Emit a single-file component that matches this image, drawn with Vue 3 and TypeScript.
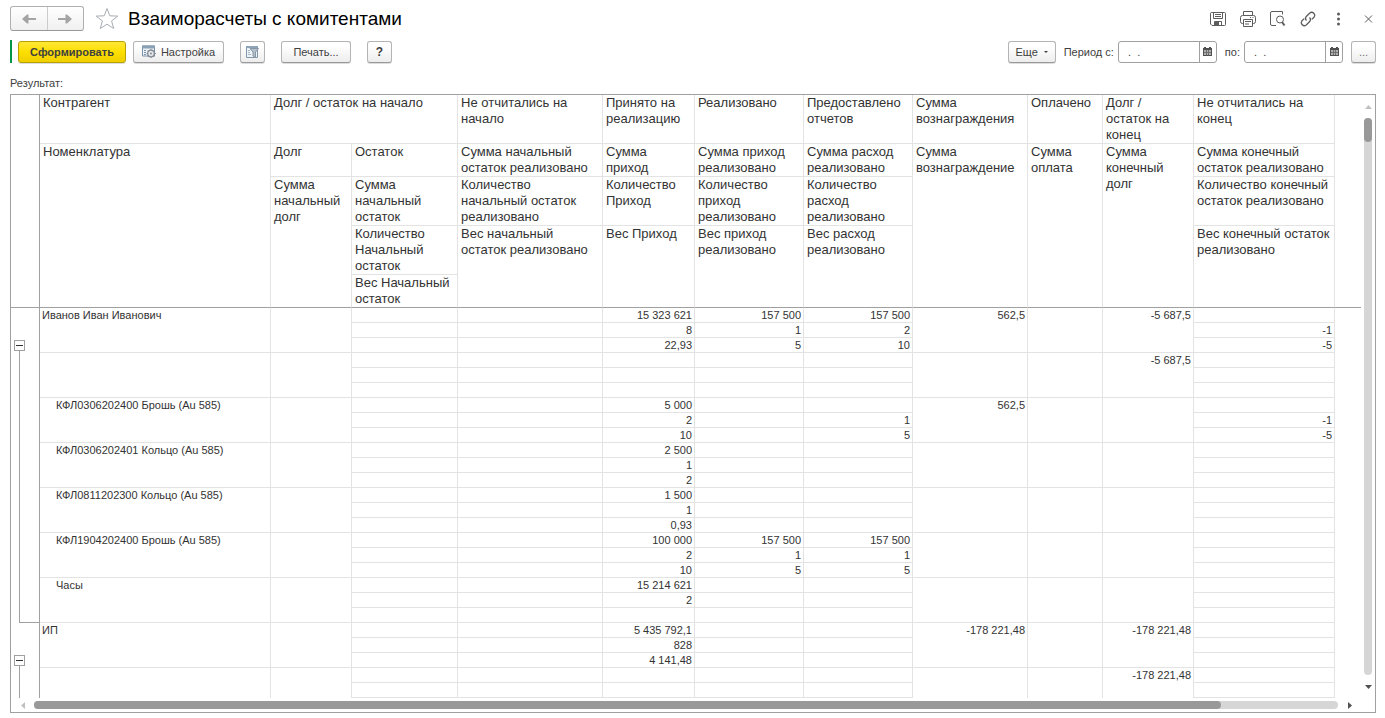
<script setup lang="ts">
import { computed, ref } from 'vue'

interface Entry {
  name: string
  child?: boolean
  received?: string[]
  sold?: string[]
  reported?: string[]
  fee?: string
  debt?: string
  closing?: string[]
}

interface Group {
  id: number
  entries: Entry[]
}

interface Line {
  key: string
  groupId: number
  entry: Entry
  line: number
  head: boolean
  treeSpan: number
}

const groups: Group[] = [
  {
    id: 1,
    entries: [
      {
        name: 'Иванов Иван Иванович',
        received: ['15 323 621', '8', '22,93'],
        sold: ['157 500', '1', '5'],
        reported: ['157 500', '2', '10'],
        fee: '562,5',
        debt: '-5 687,5',
        closing: ['', '-1', '-5'],
      },
      { name: '', child: true, debt: '-5 687,5' },
      {
        name: 'КФЛ0306202400 Брошь (Au 585)',
        child: true,
        received: ['5 000', '2', '10'],
        reported: ['', '1', '5'],
        fee: '562,5',
        closing: ['', '-1', '-5'],
      },
      { name: 'КФЛ0306202401 Кольцо (Au 585)', child: true, received: ['2 500', '1', '2'] },
      { name: 'КФЛ0811202300 Кольцо (Au 585)', child: true, received: ['1 500', '1', '0,93'] },
      {
        name: 'КФЛ1904202400 Брошь (Au 585)',
        child: true,
        received: ['100 000', '2', '10'],
        sold: ['157 500', '1', '5'],
        reported: ['157 500', '1', '5'],
      },
      { name: 'Часы', child: true, received: ['15 214 621', '2', ''] },
    ],
  },
  {
    id: 2,
    entries: [
      { name: 'ИП', received: ['5 435 792,1', '828', '4 141,48'], fee: '-178 221,48', debt: '-178 221,48' },
      { name: '', child: true, debt: '-178 221,48' },
    ],
  },
]

const collapsed = ref<number[]>([])

function toggle(id: number) {
  collapsed.value = collapsed.value.includes(id)
    ? collapsed.value.filter((x) => x !== id)
    : [...collapsed.value, id]
}

const lines = computed<Line[]>(() =>
  groups.flatMap((g) => {
    const shown = collapsed.value.includes(g.id) ? g.entries.slice(0, 1) : g.entries
    return shown.flatMap((entry, i) =>
      [0, 1, 2].map((line) => ({
        key: `${g.id}-${i}-${line}`,
        groupId: g.id,
        entry,
        line,
        head: i === 0,
        treeSpan: i === 1 && line === 0 ? (shown.length - 1) * 3 : 0,
      })),
    )
  }),
)

const dateFrom = ref('  .  .')
const dateTo = ref('  .  .')
</script>

<template>
  <div class="page">
    <header class="titlebar">
      <div class="history">
        <button type="button" aria-label="Назад">
          <svg width="14" height="10" viewBox="0 0 14 10"><path d="M0 5l5-4.500h1.500V4H14v2H6.500v3.500H5z" /></svg>
        </button>
        <button type="button" aria-label="Вперед">
          <svg width="14" height="10" viewBox="0 0 14 10"><path d="M14 5 9 .5H7.500V4H0v2h7.500v3.500H9z" /></svg>
        </button>
      </div>
      <button type="button" class="plain star" aria-label="В избранное">
        <svg width="24" height="23" viewBox="0 0 24 23">
          <path d="m12 1.500 2.800 7.300 8 .3-6.200 4.800 2.100 7.600L12 17.200l-6.700 4.300 2.100-7.600L1.200 9.100l8-.3z" />
        </svg>
      </button>
      <h1>Взаиморасчеты с комитентами</h1>
      <div class="tools">
        <button type="button" class="plain" aria-label="Сохранить">
          <svg width="16" height="16" viewBox="0 0 16 16">
            <path d="M1.500 1.500h13a1 1 0 0 1 1 1v11a1 1 0 0 1-1 1H2l-1.500-1.500V2.500a1 1 0 0 1 1-1zM3.500 1.500v6h9v-6M5 3.500h6M5 5.500h6M4.500 14.500v-4h7v4" />
            <path class="solid" d="M5 11h4v3.500H5z" />
          </svg>
        </button>
        <button type="button" class="plain" aria-label="Печать">
          <svg width="16" height="16" viewBox="0 0 16 16">
            <path d="M3.500 4.500v-4h9v4M3.500 12.500h-1a2 2 0 0 1-2-2v-4a2 2 0 0 1 2-2h11a2 2 0 0 1 2 2v4a2 2 0 0 1-2 2h-1M3.500 8.500h9v7h-9zM5 10.500h6M5 13h4M10 6.500h1M12.500 6.500h1" />
          </svg>
        </button>
        <button type="button" class="plain" aria-label="Просмотр">
          <svg width="16" height="16" viewBox="0 0 16 16">
            <path d="M6 14.500H2A1.500 1.500 0 0 1 .5 13V2A1.500 1.500 0 0 1 2 .5h10.500v3" />
            <circle cx="10" cy="8.500" r="3.500" />
            <path class="thick" d="m12 11 2.500 3.500" />
          </svg>
        </button>
        <button type="button" class="plain" aria-label="Ссылка">
          <svg width="16" height="16" viewBox="0 0 16 16">
            <path class="link" d="M6.500 9.500a3 3 0 0 1 0-4.200l3.300-3.300a3 3 0 0 1 4.200 4.200l-2.200 2.200M9.500 6.500a3 3 0 0 1 0 4.200L6.200 14A3 3 0 0 1 2 9.800l2.200-2.200" />
          </svg>
        </button>
        <button type="button" class="plain" aria-label="Еще действия">
          <svg width="16" height="16" viewBox="0 0 16 16">
            <g class="solid">
              <circle cx="8.500" cy="3" r="1.500" /><circle cx="8.500" cy="8" r="1.500" /><circle cx="8.500" cy="13" r="1.500" />
            </g>
          </svg>
        </button>
        <button type="button" class="plain" aria-label="Закрыть">
          <svg width="16" height="16" viewBox="0 0 16 16"><path d="m5 4.500 7 7m0-7-7 7" /></svg>
        </button>
      </div>
    </header>

    <div class="commands">
      <span class="accent"></span>
      <button type="button" class="btn primary">Сформировать</button>
      <button type="button" class="btn settings">
        <svg width="14" height="13" viewBox="0 0 14 13">
          <path d="M.5 1h12v10H.5z" fill="#eef3f8" stroke="#7890a8" />
          <path d="M0 .5h13v3H0z" fill="#8aa0b6" />
          <path d="M2 5.500h2M2 7.500h2M2 9.500h2" stroke="#7890a8" />
          <circle cx="9" cy="8.500" r="3.300" fill="#e4e8ec" stroke="#848c94" stroke-width="1.300" />
          <path d="M9 4v1.500M9 11.500V13M4.500 8.500H6M12 8.500h2M5.800 5.300l1 1M11.200 10.700l1 1M12.200 5.300l-1 1M5.800 11.700l1-1" stroke="#848c94" />
          <circle cx="9" cy="8.500" r="1" fill="#848c94" />
        </svg>
        Настройка
      </button>
      <button type="button" class="btn square filter" aria-label="Отбор">
        <svg width="13" height="12" viewBox="0 0 13 12">
          <path d="M.5.5h11v11H.5z" fill="#eef3f8" stroke="#8296aa" />
          <path d="M0 0h12v2H0z" fill="#8fa3b7" />
          <path d="M2 4.500h2M2 6.500h2M2 8.500h3" stroke="#a8b6c4" />
          <path d="M4 2.500h8.500L9.500 6v5.500L7 10V6z" fill="#b3bfca" stroke="#8797a6" />
        </svg>
      </button>
      <button type="button" class="btn print">Печать...</button>
      <button type="button" class="btn square help">?</button>
      <div class="period">
        <button type="button" class="btn more">Еще<i></i></button>
        <label for="from">Период с:</label>
        <div class="date">
          <input id="from" v-model="dateFrom" type="text" />
          <button type="button" aria-label="Выбрать дату начала">
            <svg width="9" height="9" viewBox="0 0 9 9">
              <path d="M0 1h9v8H0zM1 0h2v1H1zM6 0h2v1H6z" fill="#505050" />
              <path d="M1 3h7v5H1z" fill="#b0b0b0" />
              <path d="M1 5.500h7M3.500 3v5M5.500 3v5" stroke="#707070" />
            </svg>
          </button>
        </div>
        <label for="to">по:</label>
        <div class="date">
          <input id="to" v-model="dateTo" type="text" />
          <button type="button" aria-label="Выбрать дату окончания">
            <svg width="9" height="9" viewBox="0 0 9 9">
              <path d="M0 1h9v8H0zM1 0h2v1H1zM6 0h2v1H6z" fill="#505050" />
              <path d="M1 3h7v5H1z" fill="#b0b0b0" />
              <path d="M1 5.500h7M3.500 3v5M5.500 3v5" stroke="#707070" />
            </svg>
          </button>
        </div>
        <button type="button" class="btn square dots">...</button>
      </div>
    </div>

    <div class="caption">Результат:</div>

    <section class="report">
      <div class="viewport">
        <table>
          <colgroup>
            <col class="g1" /><col class="g2" /><col class="c-name" /><col class="c-debt" />
            <col class="c-rest" /><col class="c-open" /><col class="c-recv" /><col class="c-sold" />
            <col class="c-sold" /><col class="c-fee" /><col class="c-paid" /><col class="c-end" />
            <col class="c-close" /><col />
          </colgroup>
          <thead>
            <tr class="h3">
              <td colspan="2" rowspan="5" class="gutter last"></td>
              <th>Контрагент</th>
              <th colspan="2">Долг / остаток на начало</th>
              <th>Не отчитались на начало</th>
              <th>Принято на реализацию</th>
              <th>Реализовано</th>
              <th>Предоставлено отчетов</th>
              <th>Сумма вознаграждения</th>
              <th>Оплачено</th>
              <th>Долг / остаток на конец</th>
              <th>Не отчитались на конец</th>
              <td rowspan="5" class="rest last"></td>
            </tr>
            <tr class="h2">
              <th rowspan="4" class="last">Номенклатура</th>
              <th>Долг</th>
              <th>Остаток</th>
              <th>Сумма начальный остаток реализовано</th>
              <th>Сумма приход</th>
              <th>Сумма приход реализовано</th>
              <th>Сумма расход реализовано</th>
              <th rowspan="4" class="last">Сумма вознаграждение</th>
              <th rowspan="4" class="last">Сумма оплата</th>
              <th rowspan="4" class="last">Сумма конечный долг</th>
              <th>Сумма конечный остаток реализовано</th>
            </tr>
            <tr class="h3">
              <th rowspan="3" class="last">Сумма начальный долг</th>
              <th>Сумма начальный остаток</th>
              <th>Количество начальный остаток реализовано</th>
              <th>Количество Приход</th>
              <th>Количество приход реализовано</th>
              <th>Количество расход реализовано</th>
              <th>Количество конечный остаток реализовано</th>
            </tr>
            <tr class="h3">
              <th>Количество Начальный остаток</th>
              <th rowspan="2" class="last">Вес начальный остаток реализовано</th>
              <th rowspan="2" class="last">Вес Приход</th>
              <th rowspan="2" class="last">Вес приход реализовано</th>
              <th rowspan="2" class="last">Вес расход реализовано</th>
              <th rowspan="2" class="last">Вес конечный остаток реализовано</th>
            </tr>
            <tr class="h2">
              <th class="last">Вес Начальный остаток</th>
            </tr>
          </thead>
          <tbody>
            <tr v-for="l in lines" :key="l.key">
              <td v-if="l.head && l.line === 0" colspan="2" rowspan="2" class="gutter"></td>
              <td v-if="l.head && l.line === 2" colspan="2" class="gutter node">
                <button type="button" aria-label="Свернуть или развернуть группу" @click="toggle(l.groupId)"></button>
              </td>
              <template v-if="l.treeSpan">
                <td :rowspan="l.treeSpan" class="blank"></td>
                <td :rowspan="l.treeSpan" class="gutter branch"></td>
              </template>
              <template v-if="l.line === 0">
                <td rowspan="3" class="name" :class="{ child: l.entry.child }">{{ l.entry.name }}</td>
                <td rowspan="3"></td>
              </template>
              <td></td>
              <td></td>
              <td>{{ l.entry.received?.[l.line] }}</td>
              <td>{{ l.entry.sold?.[l.line] }}</td>
              <td>{{ l.entry.reported?.[l.line] }}</td>
              <template v-if="l.line === 0">
                <td rowspan="3">{{ l.entry.fee }}</td>
                <td rowspan="3"></td>
                <td rowspan="3">{{ l.entry.debt }}</td>
              </template>
              <td>{{ l.entry.closing?.[l.line] }}</td>
              <td v-if="l.line === 0" rowspan="3" class="blank"></td>
            </tr>
          </tbody>
        </table>
      </div>
      <div class="bar vertical">
        <button type="button" class="plain idle" aria-label="Вверх">
          <svg width="7" height="4" viewBox="0 0 7 4"><path d="M3.500 0 7 4H0z" /></svg>
        </button>
        <div class="track"><div class="thumb"></div></div>
        <button type="button" class="plain" aria-label="Вниз">
          <svg width="7" height="4" viewBox="0 0 7 4"><path d="M0 0h7L3.500 4z" /></svg>
        </button>
      </div>
      <div class="bar horizontal">
        <button type="button" class="plain idle" aria-label="Влево">
          <svg width="4" height="7" viewBox="0 0 4 7"><path d="M4 0v7L0 3.500z" /></svg>
        </button>
        <div class="track"><div class="thumb"></div></div>
        <button type="button" class="plain" aria-label="Вправо">
          <svg width="4" height="7" viewBox="0 0 4 7"><path d="m0 0 4 3.500L0 7z" /></svg>
        </button>
      </div>
    </section>
  </div>
</template>

<style>
body {
  margin: 0;
  background: #fff;
}
</style>

<style scoped>
.page {
  box-sizing: border-box;
  display: flex;
  flex-direction: column;
  height: 100vh;
  padding: 6px 9px 5px 10px;
  font: 11px/14px "Liberation Sans", Arial, sans-serif;
  color: #404040;
}
button,
input {
  box-sizing: border-box;
  margin: 0;
  padding: 0;
  font: inherit;
  color: inherit;
}
svg {
  display: block;
  flex: none;
}
.plain {
  display: flex;
  align-items: center;
  justify-content: center;
  border: 0;
  background: none;
}

.titlebar {
  display: flex;
  align-items: center;
  height: 25px;
}
.history {
  box-sizing: border-box;
  display: flex;
  width: 74px;
  height: 25px;
  border: 1px solid #b0b0b0;
  border-bottom-color: #999;
  border-radius: 3px;
  background: linear-gradient(#fff, #f0f0f0);
}
.history button {
  display: flex;
  flex: 1;
  align-items: center;
  justify-content: center;
  border: 0;
  background: none;
}
.history button + button {
  border-left: 1px solid #ccc;
}
.history svg {
  fill: #a4a4a4;
}
.star {
  margin-left: 11px;
}
.star svg {
  fill: #fff;
  stroke: #a8aeb4;
}
h1 {
  margin: 0 0 0 9px;
  font-size: 19px;
  font-weight: 400;
  line-height: 24px;
  color: #000;
}
.tools {
  display: flex;
  gap: 14px;
  margin-left: auto;
}
.tools svg {
  fill: none;
  stroke: #5c5c5c;
}
.tools .solid {
  fill: #5c5c5c;
  stroke: none;
}
.tools .thick {
  stroke-width: 2;
}
.tools .link {
  stroke-width: 1.300;
}

.commands {
  display: flex;
  align-items: center;
  height: 23px;
  margin-top: 9px;
}
.accent {
  width: 2px;
  height: 23px;
  margin-right: 6px;
  background: #009646;
}
.btn {
  display: flex;
  align-items: center;
  justify-content: center;
  height: 22px;
  border: 1px solid #b4b4b4;
  border-bottom-color: #999;
  border-radius: 3px;
  background: linear-gradient(#fff 20%, #ededed);
  box-shadow: 0 1px 0 #ddd;
}
.primary {
  width: 108px;
  border-color: #b8a000;
  background: linear-gradient(#ffe838, #fddf00 50%, #efcf00);
  font-weight: 700;
}
.settings {
  gap: 5px;
  width: 91px;
  margin-left: 7px;
}
.square {
  width: 25px;
}
.filter,
.print,
.help {
  margin-left: 16px;
}
.print {
  width: 70px;
}
.help {
  font-size: 12px;
  font-weight: 700;
}
.period {
  display: flex;
  align-items: center;
  margin-left: auto;
}
.more {
  gap: 6px;
  width: 48px;
}
.more i {
  border: 2px solid transparent;
  border-top-color: #404040;
  border-bottom: 0;
}
.period label {
  margin: 0 4px 0 8px;
}
.date {
  box-sizing: border-box;
  display: flex;
  width: 99px;
  height: 22px;
  border: 1px solid #a0a0a0;
  border-radius: 3px;
}
.date input {
  flex: 1;
  min-width: 0;
  padding-left: 3px;
  border: 0;
  background: none;
}
.date button {
  display: flex;
  align-items: center;
  justify-content: center;
  width: 17px;
  border: 0;
  border-left: 1px solid #a0a0a0;
  background: none;
}
.dots {
  margin-left: 8px;
  color: #707070;
}

.caption {
  margin: 13px 0 4px;
}

.report {
  display: grid;
  flex: 1;
  grid-template-columns: minmax(0, 1fr) 14px;
  grid-template-rows: minmax(0, 1fr) 14px;
  min-height: 0;
  border: 1px solid #a0a0a0;
}
.viewport {
  overflow: hidden;
  color: #333;
}
table {
  width: 100%;
  table-layout: fixed;
  border-spacing: 0;
  border-collapse: separate;
}
.g1 { width: 8px; }
.g2 { width: 21px; }
.c-name { width: 231px; }
.c-debt { width: 81px; }
.c-rest { width: 106px; }
.c-open { width: 145px; }
.c-recv { width: 92px; }
.c-sold { width: 109px; }
.c-fee { width: 115px; }
.c-paid { width: 75px; }
.c-end { width: 91px; }
.c-close { width: 141px; }
th,
td {
  box-sizing: border-box;
  padding: 0 2px 0 0;
  border: 0 solid #e3e3e3;
  border-width: 0 1px 1px 0;
  text-align: right;
  vertical-align: top;
  white-space: nowrap;
}
th {
  padding: 0 3px;
  font-size: 13px;
  font-weight: 400;
  line-height: 16px;
  text-align: left;
  white-space: normal;
}
.h2 { height: 33px; }
.h3 { height: 49px; }
tbody tr {
  height: 15px;
}
.last {
  border-bottom-color: #a0a0a0;
}
.rest {
  border-right: 0;
}
.blank {
  border: 0;
}
.name {
  padding-left: 2px;
  text-align: left;
}
.child {
  padding-left: 16px;
}
.gutter {
  padding: 0;
  border-right-color: #a0a0a0;
}
tbody .gutter {
  border-bottom: 0;
}
tbody .branch {
  border-bottom: 1px solid #a0a0a0;
  border-left: 1px solid #a0a0a0;
}
.node button {
  display: flex;
  align-items: center;
  justify-content: center;
  width: 11px;
  height: 11px;
  margin: 2px 0 0 3px;
  border: 1px solid #a0a0a0;
  background: #fff;
}
.node button::before {
  width: 7px;
  height: 1px;
  background: #303030;
  content: "";
}
.node::after {
  display: block;
  width: 1px;
  height: 2px;
  margin-left: 8px;
  background: #a0a0a0;
  content: "";
}

.bar {
  display: flex;
  align-items: center;
}
.vertical {
  flex-direction: column;
}
.vertical .plain {
  width: 14px;
  height: 23px;
}
.horizontal .plain {
  width: 23px;
  height: 14px;
}
.bar svg {
  fill: #505050;
}
.bar .idle svg {
  fill: #c0c0c0;
}
.track {
  flex: 1;
  border-radius: 4px;
  background: #d6d6d6;
}
.thumb {
  border-radius: 4px;
  background: #999;
}
.vertical .track {
  width: 8px;
}
.vertical .thumb {
  height: 24px;
}
.horizontal .track,
.horizontal .thumb {
  height: 8px;
}
.horizontal .track {
  flex: 1;
}
.horizontal .thumb {
  width: 91%;
}
</style>
